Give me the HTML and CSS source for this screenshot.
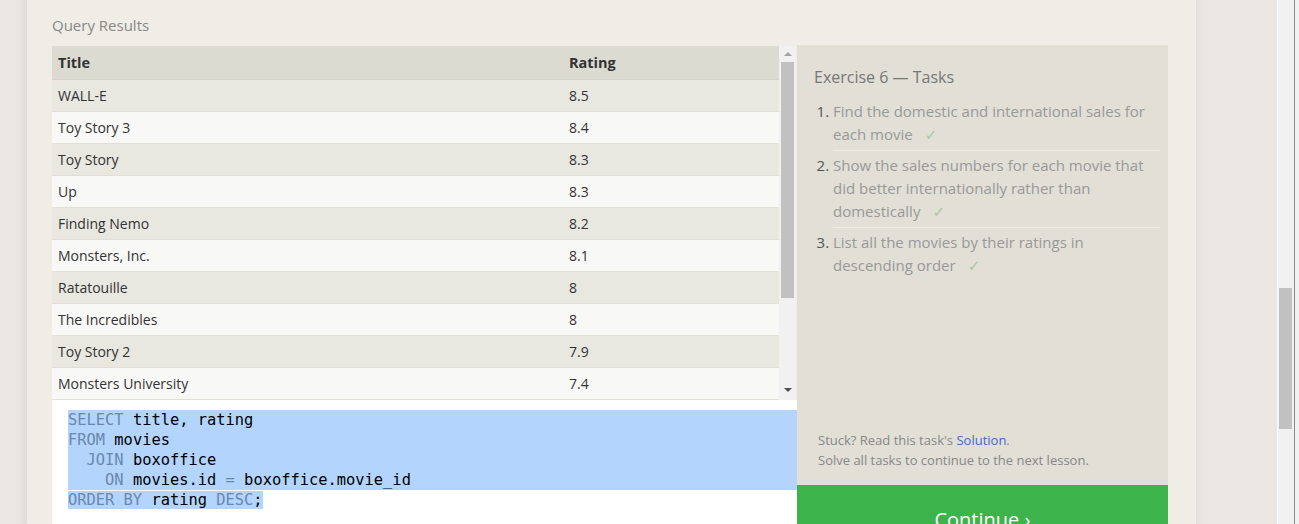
FILE: index.html
```html
<!DOCTYPE html>
<html>
<head>
<meta charset="utf-8">
<title>Query Results</title>
<link rel="stylesheet" href="styles.css">
</head>
<body>
<div class="gutter gutter-left"></div>
<main class="card">
  <h3 class="section-title">Query Results</h3>
  <div class="workspace">
    <div class="work-left">
      <div class="results">
        <div class="table-wrap">
          <table class="results-table">
            <thead>
              <tr><th class="col-title">Title</th><th>Rating</th></tr>
            </thead>
            <tbody>
              <tr><td>WALL-E</td><td>8.5</td></tr>
              <tr><td>Toy Story 3</td><td>8.4</td></tr>
              <tr><td>Toy Story</td><td>8.3</td></tr>
              <tr><td>Up</td><td>8.3</td></tr>
              <tr><td>Finding Nemo</td><td>8.2</td></tr>
              <tr><td>Monsters, Inc.</td><td>8.1</td></tr>
              <tr><td>Ratatouille</td><td>8</td></tr>
              <tr><td>The Incredibles</td><td>8</td></tr>
              <tr><td>Toy Story 2</td><td>7.9</td></tr>
              <tr><td>Monsters University</td><td>7.4</td></tr>
            </tbody>
          </table>
        </div>
        <div class="vscroll">
          <span class="arrow arrow-up"></span>
          <div class="vscroll-thumb"></div>
          <span class="arrow arrow-down"></span>
        </div>
      </div>
      <div class="editor">
        <div class="code-line sel"><span class="kw">SELECT</span> title, rating</div>
        <div class="code-line sel"><span class="kw">FROM</span> movies</div>
        <div class="code-line sel">  <span class="kw">JOIN</span> boxoffice</div>
        <div class="code-line sel">    <span class="kw">ON</span> movies.id <span class="kw">=</span> boxoffice.movie_id</div>
        <div class="code-line"><span class="sel"><span class="kw">ORDER BY</span> rating <span class="kw">DESC</span>;</span></div>
      </div>
    </div>
    <aside class="tasks">
      <h4 class="tasks-title">Exercise 6 — Tasks</h4>
      <ol class="task-list">
        <li>Find the domestic and international sales for each movie<span class="check">✓</span></li>
        <li>Show the sales numbers for each movie that did better internationally rather than domestically<span class="check">✓</span></li>
        <li class="last">List all the movies by their ratings in descending order<span class="check">✓</span></li>
      </ol>
      <div class="stuck">
        <p>Stuck? Read this task's <a class="link" href="#">Solution</a>.</p>
        <p>Solve all tasks to continue to the next lesson.</p>
      </div>
      <div class="continue">Continue ›</div>
    </aside>
  </div>
</main>
<div class="gutter gutter-right"></div>
<div class="pagebar">
  <div class="pagebar-track"><div class="pagebar-thumb"></div></div>
  <div class="pagebar-edge"></div>
</div>
</body>
</html>
```

FILE: styles.css
```css
html, body {
  margin: 0;
  padding: 0;
}
body {
  width: 1299px;
  height: 524px;
  overflow: hidden;
  display: flex;
  background: #ece6e3;
  font-family: "Open Sans", "Noto Sans", sans-serif;
  color: #333;
}
.gutter-left {
  width: 27px;
  flex: none;
  background: linear-gradient(to right, #ece6e3 0, #ebe5e2 18px, #e2dcd9 27px);
}
.gutter-right {
  width: 81px;
  flex: none;
  background: linear-gradient(to right, #e1ddda 0, #e9e4e1 4px, #ece6e3 10px);
}
.card {
  width: 1169px;
  flex: none;
  background: #f0ede6;
  padding: 15px 0 0 25px;
  box-sizing: border-box;
}
.section-title {
  margin: 0 0 10px 0;
  font-weight: 400;
  font-size: 15px;
  line-height: 20px;
  color: #888;
}
.workspace {
  display: flex;
  width: 1116px;
  height: 540px;
}
.work-left {
  width: 745px;
  flex: none;
  display: flex;
  flex-direction: column;
}
.results {
  height: 354px;
  margin-top: 1px;
  display: flex;
  flex: none;
}
.table-wrap {
  width: 727px;
  overflow: hidden;
}
.results-table {
  width: 100%;
  border-collapse: collapse;
  font-size: 14px;
}
.results-table th {
  height: 33px;
  padding: 0 6px;
  text-align: left;
  background: #dcdbd2;
  font-weight: 700;
  color: #333;
  font-size: 14.5px;
  border-bottom: 1px solid #d6d5cc;
  box-sizing: border-box;
}
.results-table .col-title {
  width: 511px;
}
.results-table td {
  height: 32px;
  padding: 0 6px;
  box-sizing: border-box;
  color: #333;
  border-bottom: 1px solid #e0dfd8;
}
.results-table tbody tr:nth-child(odd) td {
  background: #e8e7e0;
}
.results-table tbody tr:nth-child(even) td {
  background: #f8f8f7;
}
.vscroll {
  width: 17px;
  flex: none;
  background: #f1f1f1;
  display: flex;
  flex-direction: column;
  align-items: center;
}
.arrow {
  width: 0;
  height: 0;
  border-left: 4px solid transparent;
  border-right: 4px solid transparent;
}
.arrow-up {
  margin-top: 6px;
  border-bottom: 4px solid #a3a3a3;
}
.vscroll-thumb {
  width: 13px;
  height: 236px;
  margin-top: 6px;
  background: #c1c1c1;
}
.arrow-down {
  margin-top: auto;
  margin-bottom: 8px;
  border-top: 4px solid #505050;
}
.editor {
  flex: 1;
  background: #fff;
  padding: 10px 0 0 16px;
  font-family: "DejaVu Sans Mono", "Liberation Mono", monospace;
  font-size: 15.4px;
  line-height: 20px;
  color: #000;
}
.code-line {
  height: 20px;
  line-height: 21px;
  white-space: pre;
}
.sel {
  background: #b3d4fc;
}
.kw {
  color: #6a88ac;
}
.tasks {
  width: 371px;
  flex: none;
  background: #e1dfd6;
  display: flex;
  flex-direction: column;
  box-sizing: border-box;
}
.tasks-title {
  margin: 21px 0 0 17px;
  font-weight: 400;
  font-size: 16px;
  line-height: 22px;
  color: #777;
}
.task-list {
  margin: 12px 8px 0 36px;
  padding: 0;
  font-size: 15px;
  line-height: 23px;
  color: #999;
}
.task-list li {
  padding: 0 0 3px 0;
  margin-bottom: 3px;
  border-bottom: 1px solid #eceae3;
}
.task-list li.last {
  border-bottom: none;
}
.task-list li::marker {
  color: #555;
}
.check {
  margin-left: 12px;
  color: #a9c9a4;
  font-family: "DejaVu Sans", sans-serif;
  font-size: 15px;
}
.stuck {
  margin: auto 0 15px 21px;
  font-size: 13px;
  line-height: 20px;
  color: #888;
}
.stuck p {
  margin: 0;
}
.link {
  color: #3c6bc8;
  text-decoration: none;
}
.continue {
  height: 100px;
  flex: none;
  background: #3cb44b;
  color: #fff;
  text-align: center;
  font-size: 20px;
  line-height: 30px;
  padding-top: 20px;
  box-sizing: border-box;
}
.pagebar {
  width: 22px;
  flex: none;
  display: flex;
  background: #f1f1f1;
}
.pagebar-track {
  width: 17px;
  border-left: 1px solid #f8f8f8;
  box-sizing: border-box;
}
.pagebar-thumb {
  width: 13px;
  height: 141px;
  margin: 288px 0 0 1px;
  background: #c1c1c1;
}
.pagebar-edge {
  width: 1px;
  background: #8a8a8a;
}
```
